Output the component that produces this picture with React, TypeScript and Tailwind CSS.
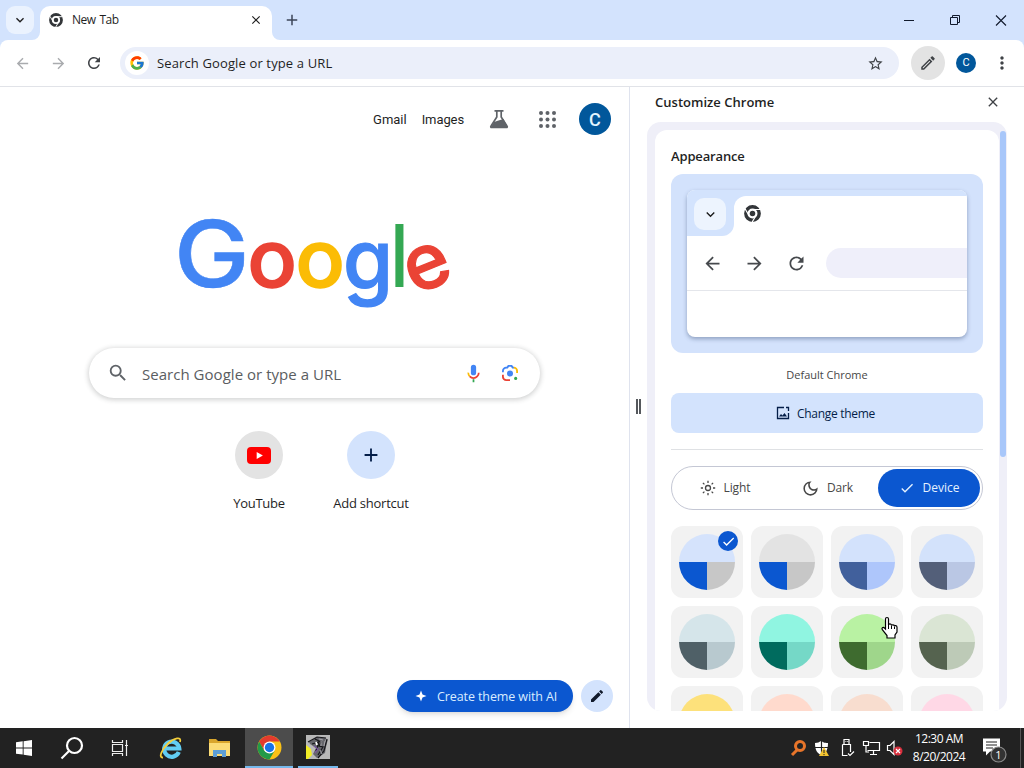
import type { ReactNode } from "react";
import {
  MdAdd,
  MdArrowBack,
  MdArrowForward,
  MdCheck,
  MdClose,
  MdEdit,
  MdKeyboardArrowDown,
  MdMoreVert,
  MdOutlineDarkMode,
  MdOutlineEdit,
  MdRefresh,
  MdSearch,
  MdStarBorder,
} from "react-icons/md";
import { FcGoogle } from "react-icons/fc";

type Swatch = { top: string; left: string; right: string };

const swatches: Swatch[] = [
  { top: "#d5e3fc", left: "#0b57d0", right: "#c7c7c7" },
  { top: "#e3e3e3", left: "#0b57d0", right: "#c7c7c7" },
  { top: "#d3e2fc", left: "#41609c", right: "#aec6fb" },
  { top: "#d3e2fb", left: "#535f79", right: "#bac7e4" },
  { top: "#d5e5ea", left: "#4f6067", right: "#b8c9cf" },
  { top: "#90f5e1", left: "#006b5e", right: "#75d8c7" },
  { top: "#b9f2a3", left: "#3e6b2f", right: "#9fd68b" },
  { top: "#dae5d4", left: "#55634f", right: "#bdcab7" },
  { top: "#fde17b", left: "#6f5d00", right: "#dfc55e" },
  { top: "#ffdacd", left: "#8f4b32", right: "#ffb59c" },
  { top: "#f8ddcf", left: "#755846", right: "#e2bfa9" },
  { top: "#ffd8e6", left: "#8d4960", right: "#ffb1c8" },
];

function MonoChrome({ size }: { size: number }) {
  return (
    <svg width={size} height={size} viewBox="0 0 16 16" fill="none">
      <circle cx="8" cy="8" r="6.3" stroke="#333639" strokeWidth="3.2" />
      <circle cx="8" cy="8" r="3.9" fill="#fff" />
      <circle cx="8" cy="8" r="2.6" fill="#333639" />
      <path d="M8 4.2h7.2M4.7 9.9 1.1 3.7M11.3 9.9 7.7 16" stroke="#fff" strokeWidth="1.1" />
    </svg>
  );
}

function ColorChrome() {
  return (
    <svg width="25" height="25" viewBox="0 0 48 48">
      <circle cx="24" cy="24" r="23" fill="#fbc116" />
      <path d="M4.1 12.5A23 23 0 0 1 43.9 12.5H24L14 30Z" fill="#e33b2e" />
      <path d="M4.1 12.5A23 23 0 0 0 24 47L34 29.8 14 30Z" fill="#229a48" />
      <circle cx="24" cy="24" r="11.5" fill="#fff" />
      <circle cx="24" cy="24" r="9" fill="#1a73e8" />
    </svg>
  );
}

function TabStrip() {
  return (
    <div className="flex h-10 shrink-0 items-end bg-[#d3e3fd]">
      <div className="mb-[6px] ml-1.5 flex h-7 w-7 items-center justify-center rounded-[9px] bg-[#eaf2fe]">
        <MdKeyboardArrowDown size={16} className="text-[#1f1f1f]" />
      </div>
      <div className="relative ml-1.5 flex h-[34px] w-[232px] items-center rounded-t-[10px] bg-white pb-1.5">
        <svg className="absolute -left-2 bottom-0" width="8" height="8">
          <path d="M8 0v8H0a8 8 0 0 0 8-8" fill="#fff" />
        </svg>
        <svg className="absolute -right-2 bottom-0" width="8" height="8">
          <path d="M0 0v8h8a8 8 0 0 1-8-8" fill="#fff" />
        </svg>
        <span className="ml-[9px]"><MonoChrome size={14} /></span>
        <span className="ml-[9px] text-[12px] tracking-[-0.45px] text-[#1f1f1f] [word-spacing:1px]">New Tab</span>
        <MdClose size={14} className="ml-auto mr-[9px] text-[#1f1f1f]" />
      </div>
      <MdAdd size={18} className="mb-[11px] ml-[11px] text-[#3c4658]" />
      <svg className="mb-3 ml-auto mr-[15px]" width="106" height="16" viewBox="0 0 106 16" fill="none" stroke="#111a2c">
        <path d="M1 8.5h10" />
        <path d="M47.5 5.5h7v7h-7zM49.5 5.5v-2h7v7h-2" />
        <path d="m93 3.500 10 10m0-10-10 10" strokeWidth="1.1" />
      </svg>
    </div>
  );
}

function Toolbar() {
  return (
    <div className="shrink-0 bg-[#d3e3fd]">
      <div className="flex h-[47px] items-center rounded-t-lg border-b border-[#e1e3e8] bg-white">
        <MdArrowBack size={17} className="ml-[14px] text-[#a9abae]" />
        <MdArrowForward size={17} className="ml-[19px] text-[#a9abae]" />
        <MdRefresh size={18} className="ml-[18px] text-[#3f4246]" />
        <div className="ml-[17px] flex h-8 w-[779px] items-center rounded-full bg-[#ebeffa] pl-[5px] pr-[15px]">
          <span className="flex h-6 w-6 items-center justify-center rounded-full bg-white">
            <FcGoogle size={16} />
          </span>
          <span className="ml-2 pt-px text-[13px] tracking-[0.13px] text-[#1f1f1f]">Search Google or type a URL</span>
          <MdStarBorder size={17} className="ml-auto text-[#3f4246]" />
        </div>
        <div className="ml-3 flex h-[34px] w-[34px] items-center justify-center rounded-full bg-[#e3e3e3]">
          <MdOutlineEdit size={18} className="text-[#3f4246]" />
        </div>
        <div className="ml-[11px] flex h-5 w-5 items-center justify-center rounded-full bg-[#01579b] font-['Roboto',sans-serif] text-[11px] text-white">C</div>
        <MdMoreVert size={20} className="ml-4 text-[#3f4246]" />
      </div>
    </div>
  );
}

function GoogleLogo() {
  return (
    <svg
      className="mx-auto block overflow-visible"
      width="280"
      height="110"
      viewBox="174 210 280 110"
      fontFamily="Inter, sans-serif"
      fontWeight="500"
    >
      <text transform="translate(173 287.300) scale(1.1 1)" fontSize="92" fill="#4285f4" stroke="#4285f4" strokeWidth=".5">G</text>
      <text transform="translate(246.500 287.300) scale(1.02 1)" fontSize="80" fill="#ea4335" stroke="#ea4335" strokeWidth="1.6">o</text>
      <text transform="translate(294.500 287.300) scale(1.02 1)" fontSize="80" fill="#fbbc05" stroke="#fbbc05" strokeWidth="1.6">o</text>
      <text transform="translate(342 288.500) scale(1.01 1.03)" fontSize="80" fill="#4285f4" stroke="#4285f4" strokeWidth="1.2">g</text>
      <text transform="translate(389 287) scale(.86 1)" fontSize="87" fill="#34a853">l</text>
      <text transform="translate(403.500 288.500) rotate(-22 22 -22)" fontSize="77" fill="#ea4335" stroke="#ea4335" strokeWidth="1.2">e</text>
    </svg>
  );
}

function FlaskIcon() {
  return (
    <svg width="24" height="24" viewBox="0 0 24 24" fill="none">
      <path d="M7.500 3.800h9M9.800 4v6L3.900 19.200a.8.8 0 0 0 .7 1.300h14.800a.8.8 0 0 0 .7-1.300L14.200 10V4" stroke="#5f6368" strokeWidth="1.700" />
      <path d="m7 15 4.500-1.500 5-1.500 4 8H4z" fill="#5f6368" />
    </svg>
  );
}

function AppsIcon() {
  const steps = [4, 10.5, 17];
  return (
    <svg width="21" height="21" viewBox="0 0 21 21" fill="#5f6368">
      {steps.map(y => steps.map(x => <circle key={`${x}-${y}`} cx={x} cy={y} r="2" />))}
    </svg>
  );
}

function MicIcon() {
  return (
    <svg width="21" height="21" viewBox="0 0 24 24" fill="none">
      <rect x="9" y="2" width="6" height="12" rx="3" fill="#4285f4" />
      <path d="M11 18.500h2V22h-2z" fill="#34a853" />
      <path d="M6 11a6 6 0 0 0 1.700 4.200" stroke="#fbbc05" strokeWidth="2" />
      <path d="M7.700 15.200A6 6 0 0 0 12 17.200c3.300 0 6-2.800 6-6.200" stroke="#ea4335" strokeWidth="2" />
    </svg>
  );
}

function LensIcon() {
  return (
    <svg width="20" height="20" viewBox="0 0 24 24" fill="none" strokeWidth="2.200">
      <path d="M3.500 11V9.500a4 4 0 0 1 4-4" stroke="#4285f4" />
      <path d="M7 5.500h1.800l1.300-2h3.800l1.300 2H17" stroke="#4285f4" />
      <path d="M16.500 5.500a4 4 0 0 1 4 4v2.500" stroke="#fbbc05" />
      <path d="M3.500 14v2.500a4 4 0 0 0 4 4H12" stroke="#ea4335" />
      <circle cx="12" cy="12.500" r="3.600" fill="#4285f4" />
      <circle cx="18.800" cy="18.500" r="1.900" fill="#34a853" />
    </svg>
  );
}

function Shortcut({ label, tint, children }: { label: string; tint: string; children: ReactNode }) {
  return (
    <div className="flex w-28 flex-col items-center">
      <div className={`flex h-12 w-12 items-center justify-center rounded-full ${tint}`}>{children}</div>
      <span className="mt-[15px] text-[13px] leading-[18px] tracking-[-0.25px] text-[#1f1f1f]">{label}</span>
    </div>
  );
}

function NewTabPage() {
  return (
    <div className="flex w-[630px] shrink-0 flex-col border-r border-[#dfe3ee] bg-white">
      <div className="flex h-16 items-center justify-end pr-[18px] font-['Roboto',sans-serif] text-[13px] text-[#1f1f1f]">
        <span className="pt-px">Gmail</span>
        <span className="ml-[15px] pt-px tracking-[-0.1px]">Images</span>
        <span className="ml-[23px]"><FlaskIcon /></span>
        <span className="ml-[26px]"><AppsIcon /></span>
        <span className="ml-[21px] flex h-8 w-8 items-center justify-center rounded-full bg-[#01579b] text-[18px] font-medium text-[#e2f5ff]">C</span>
      </div>

      <div className="mt-[59px]"><GoogleLogo /></div>

      <div className="ml-[89px] mt-7 flex h-[50px] w-[451px] items-center rounded-full bg-white pl-[18px] pr-[20px] shadow-[0_1px_5px_1px_rgba(32,33,36,0.2)]">
        <MdSearch size={22} className="text-[#5f6368]" />
        <span className="ml-[13px] pt-[2px] text-[15px] tracking-[0.03px] text-[#5a5d61]">Search Google or type a URL</span>
        <span className="ml-auto"><MicIcon /></span>
        <span className="ml-4"><LensIcon /></span>
      </div>

      <div className="ml-[203px] mt-[33px] flex">
        <Shortcut label="YouTube" tint="bg-[#e3e3e3]">
          <svg width="24" height="17" viewBox="0 0 24 17">
            <rect width="24" height="17" rx="4" fill="#f00" />
            <path d="m9.700 5 6.200 3.500-6.200 3.500z" fill="#fff" />
          </svg>
        </Shortcut>
        <Shortcut label="Add shortcut" tint="bg-[#d3e3fd]">
          <MdAdd size={22} className="text-[#041e49]" />
        </Shortcut>
      </div>

      <div className="mb-4 mr-4 mt-auto flex items-center justify-end gap-2">
        <div className="flex h-8 w-44 items-center rounded-full bg-[#0b57d0] pl-[17px] text-white shadow-md">
          <svg width="14" height="14" viewBox="0 0 14 14" fill="currentColor">
            <path d="M7 1.500 8.500 5.500 12.500 7 8.500 8.500 7 12.500 5.500 8.500 1.500 7 5.500 5.500Z" />
          </svg>
          <span className="ml-[9px] pt-[2px] text-[12.500px] tracking-[-0.1px] text-[#d9ecff]">Create theme with AI</span>
        </div>
        <div className="flex h-8 w-8 items-center justify-center rounded-full bg-[#d3e3fd]">
          <MdEdit size={16} className="text-[#111a2c]" />
        </div>
      </div>
    </div>
  );
}

function ThemePreview() {
  return (
    <div className="mt-[9px] h-[179px] rounded-xl bg-[#d3e2fc] px-4 pt-4">
      <div className="h-[147px] overflow-hidden rounded-lg bg-white shadow-[0_2px_4px_0_rgba(60,80,120,0.45)]">
        <div className="h-[6px] bg-[#d3e3fd]" />
        <div className="flex h-10 bg-[#d3e3fd]">
          <div className="w-[47px] bg-white">
            <div className="flex h-10 items-center rounded-br-xl bg-[#d3e3fd] pb-1 pl-[7px]">
              <div className="flex h-8 w-8 items-center justify-center rounded-[10px] bg-[#edf4fe]">
                <MdKeyboardArrowDown size={17} className="text-[#1f1f1f]" />
              </div>
            </div>
          </div>
          <div className="flex-1 rounded-tl-xl bg-white pl-[10px] pt-[9px]">
            <MonoChrome size={17} />
          </div>
        </div>
        <div className="flex h-[55px] items-center border-b border-[#e4e6eb] bg-white pl-[15px] text-[#46494d]">
          <MdArrowBack size={21} />
          <MdArrowForward size={21} className="ml-[21px]" />
          <MdRefresh size={21} className="ml-[21px]" />
          <div className="ml-[19px] h-[30px] flex-1 rounded-l-full bg-[#efeffa]" />
        </div>
      </div>
    </div>
  );
}

function SwatchTile({ swatch, selected }: { swatch: Swatch; selected: boolean }) {
  return (
    <div className="relative flex h-[72px] w-[72px] items-center justify-center rounded-xl bg-[#f2f2f2]">
      <svg width="56" height="56" viewBox="0 0 56 56">
        <path d="M0 28a28 28 0 0 1 56 0z" fill={swatch.top} />
        <path d="M0 28a28 28 0 0 0 28 28V28z" fill={swatch.left} />
        <path d="M56 28a28 28 0 0 1-28 28V28z" fill={swatch.right} />
      </svg>
      {selected && (
        <span className="absolute right-[5px] top-[5px] flex h-5 w-5 items-center justify-center rounded-full bg-[#0b57d0]">
          <MdCheck size={15} className="text-white" />
        </span>
      )}
    </div>
  );
}

function CustomizePanel() {
  return (
    <div className="flex min-w-0 flex-1 bg-white">
      <div className="ml-[6px] mt-[312px] flex h-[15px] w-[5px] justify-between">
        <span className="w-[2px] bg-[#55585c]" />
        <span className="w-[2px] bg-[#55585c]" />
      </div>
      <div className="ml-[6px] w-[360px]">
        <div className="flex h-[35px] items-center justify-between pb-1 pl-2 pr-[6px] text-[13px] font-semibold text-[#1f1f1f]">
          <span className="tracking-[0.02px]">Customize Chrome</span>
          <MdClose size={16} className="mb-px text-[#3f4246]" />
        </div>
        <div className="relative h-[589px] overflow-hidden rounded-[14px] bg-[#efeff8] px-2 pt-2">
          <div className="absolute right-[1px] top-[9px] h-[326px] w-[6px] rounded-sm bg-[#a8c7fa]" />
          <div className="h-full rounded-t-xl bg-white px-4 pt-[17px]">
            <h2 className="text-[13px] font-semibold leading-[18px] tracking-[-0.15px] text-[#1f1f1f]">Appearance</h2>
            <ThemePreview />
            <p className="mt-[14px] text-center text-[11px] leading-4 text-[#474747]">Default Chrome</p>
            <div className="mt-[10px] flex h-10 items-center rounded-lg bg-[#d3e3fd] pl-[105px] text-[#041e49]">
              <svg width="14" height="14" viewBox="0 0 14 14" fill="none" stroke="currentColor" strokeWidth="1.300">
                <path d="M8 1.500H1.500v11h11V7" />
                <path d="M10 1.500h2.500V5" />
                <path d="m3 10.500 2-2.500 1.500 1.500L8.500 7l2.500 3.500z" fill="currentColor" stroke="none" />
              </svg>
              <span className="ml-[7px] pt-px text-[12px] tracking-[-0.3px]">Change theme</span>
            </div>
            <div className="mt-4 h-px bg-[#dfe1e4]" />
            <div className="mt-4 flex h-11 items-center rounded-full border border-[#c4c7d4] p-[2px] text-[12px] text-[#474747]">
              <div className="flex w-[102px] items-center justify-center gap-2">
                <svg width="16" height="16" viewBox="0 0 16 16" fill="none" stroke="currentColor" strokeWidth="1.300">
                  <circle cx="8" cy="8" r="2.500" />
                  <path d="M8 .8v2.200M8 13v2.200M.8 8H3M13 8h2.200M2.900 2.900l1.500 1.500M11.600 11.600l1.500 1.500M2.900 13.100l1.500-1.500M11.600 4.400l1.500-1.500" />
                </svg>
                <span className="tracking-[-0.1px]">Light</span>
              </div>
              <div className="flex flex-1 items-center justify-center gap-[7px]">
                <MdOutlineDarkMode size={19} />
                <span className="tracking-[-0.2px]">Dark</span>
              </div>
              <div className="flex h-[38px] w-[102px] items-center justify-center gap-2 rounded-full bg-[#0b57d0] text-[#e6f2ff]">
                <MdCheck size={16} />
                <span>Device</span>
              </div>
            </div>
            <div className="mt-4 grid grid-cols-4 gap-2">
              {swatches.map((s, i) => <SwatchTile key={i} swatch={s} selected={i === 0} />)}
            </div>
          </div>
        </div>
      </div>
    </div>
  );
}

function Taskbar() {
  return (
    <div className="flex h-10 shrink-0 items-center bg-[#222222] text-white">
      <div className="flex w-12 justify-center">
        <svg width="16" height="16" viewBox="0 0 16 16" fill="#fff">
          <path d="M0 2.300 6.700 1.300v6.200H0zM7.600 1.200 16 0v7.500H7.600zM0 8.400h6.700v6.200L0 13.700zM7.600 8.400H16V16l-8.400-1.200z" />
        </svg>
      </div>
      <div className="flex w-12 justify-center">
        <svg width="24" height="24" viewBox="0 0 24 24" fill="none" stroke="#fff" strokeWidth="2.200">
          <circle cx="14.500" cy="9.500" r="7.500" />
          <path d="m9 15-7.500 7.500" />
        </svg>
      </div>
      <div className="flex w-12 justify-center">
        <svg width="18" height="16" viewBox="0 0 18 16" fill="none" stroke="#eee" strokeWidth="1.200">
          <path d="M1.500 4.500h10v7h-10zM1.500 0v2.500h10V0M1.500 16v-2.500h10V16M15.500 0v16M14 5.500h3" />
        </svg>
      </div>
      <div className="flex w-[54px] justify-center">
        <svg width="24" height="24" viewBox="0 0 24 24" fill="none">
          <path d="M19.800 16A7.600 7.600 0 1 1 20.300 12.500H7" stroke="#62cdf3" strokeWidth="4.200" />
          <path d="M4 21.500C-1 22 3 13 9 7.500S23 0 21 6" stroke="#f4ce3b" strokeWidth="1.800" />
        </svg>
      </div>
      <div className="flex w-[47px] justify-center pr-1">
        <svg width="23" height="20" viewBox="0 0 23 20">
          <path d="M1 1h7l2 2h12v15H1z" fill="#d9a62c" />
          <path d="M1 5h21v13H1z" fill="#fbdc76" />
          <path d="M5 19v-7h13v7h-4v-3H9v3z" fill="#5d9ed5" />
        </svg>
      </div>
      <div className="flex h-10 w-12 items-center justify-center border-b-2 border-[#76b9ed] bg-[#4c4c4c]">
        <ColorChrome />
      </div>
      <div className="ml-[5px] flex h-10 w-10 items-center justify-center border-b-2 border-[#76b9ed]">
        <svg width="24" height="24" viewBox="0 0 24 24">
          <path d="M0 0h24v24H0z" fill="#b9b9b9" />
          <path d="M0 10 5 14l1 6-4 4H0z" fill="#f2ed26" />
          <path d="m3 7 8-5 9 1-1 4 3-3-2 8-1 6-8 5-4-4 3-6-6-4z" fill="#66666c" />
          <path d="m2 7 9-5 9 1M9 4l6 3-2 4 4 1-5 8M6 9l7-2-3 9M21 4l-3 12-6 7" stroke="#17171b" strokeWidth="1.200" fill="none" />
          <path d="M15 6v5m-1 4 2 4m3-13-1 5m-5-7 4 1" stroke="#a3a3a8" fill="none" />
          <path d="m10 7 1 3" stroke="#fff" strokeWidth="1.800" />
          <path d="m8 11 4 3-3 4" stroke="#7a55a0" strokeWidth="1.200" fill="none" />
        </svg>
      </div>

      <svg className="ml-auto" width="114" height="20" viewBox="0 0 114 20" fill="none">
        <circle cx="10" cy="8" r="4.500" stroke="#e8752a" strokeWidth="3" />
        <path d="m7 12-5 5" stroke="#e8752a" strokeWidth="3" />
        <path d="M25 5c3 0 4-1 6-2 2 1 3 2 7 2 0 7-2 10-7 12-4-2-6-5-6-12" fill="#fff" />
        <path d="M31.500 3v14M25 9.500h13" stroke="#222" strokeWidth="1.200" />
        <path d="m34 9 5 9H29z" fill="#f4c430" />
        <path d="M34 12v3m0 1v1.200" stroke="#222" />
        <path d="M52.500 6.500h8V14M52.500 6.500V17.500h5M54 6V1.500h5V6M55.500 3.500h.8M57.300 3.500h.8" stroke="#fff" strokeWidth="1.200" />
        <path d="m58 15.500 2 2 4-4" stroke="#fff" strokeWidth="1.200" />
        <path d="M79.500 4.500h10v8h-12M83.500 12.500v4M80 16.500h7M73.500 3.500h5v4h-5zM76 8v6h3" stroke="#fff" strokeWidth="1.200" />
        <path d="M97.500 7.500h2.500l4-4v13l-4-4h-2.500z" stroke="#fff" strokeWidth="1.200" />
        <circle cx="108" cy="13" r="4.500" fill="#d9303e" />
        <path d="m106 11 4 4m0-4-4 4" stroke="#fff" strokeWidth="1.200" />
      </svg>
      <div className="ml-[3px] flex w-[64px] flex-col items-center text-[12px] leading-[18px] tracking-[-0.5px]">
        <span>12:30 AM</span>
        <span className="whitespace-nowrap">8/20/2024</span>
      </div>
      <svg className="ml-[10px] mr-[13px] mt-[3px]" width="26" height="26" viewBox="0 0 26 26">
        <path d="M2 1.500h17v13H9l-4 4v-4H2z" fill="#fff" />
        <path d="M5 5h11M5 8h11M5 11h7" stroke="#222" />
        <circle cx="17.500" cy="17.500" r="7.500" fill="#333" stroke="#8a8a8a" strokeWidth="1.200" />
        <text x="17.500" y="21.500" textAnchor="middle" fontSize="11" fill="#fff">1</text>
      </svg>
      <div className="h-full w-px bg-[#555]" />
      <div className="w-[3px]" />
    </div>
  );
}

export default function App() {
  return (
    <div className="relative flex h-[768px] w-[1024px] flex-col overflow-hidden bg-white font-['Open_Sans','Noto_Sans',sans-serif]">
      <TabStrip />
      <Toolbar />
      <div className="flex min-h-0 flex-1">
        <NewTabPage />
        <CustomizePanel />
      </div>
      <Taskbar />
      <svg className="absolute left-[880px] top-[616px]" width="19" height="23" viewBox="0 0 19 23">
        <path
          d="M5.500 13V3c0-2 3-2 3 0v6c0-1.500 3-1.500 3 .5 0-1 3-1 3 .7 0-1 2.500-.7 2.500 1V16l-2 3v3H7v-2.500L2.500 14c-1.500-2 .5-3.500 2-2z"
          fill="#fff"
          stroke="#000"
          strokeWidth="1.200"
        />
        <path d="M8.500 9v4M11.500 9.500V13M14.500 10.500V13" stroke="#000" />
      </svg>
    </div>
  );
}
